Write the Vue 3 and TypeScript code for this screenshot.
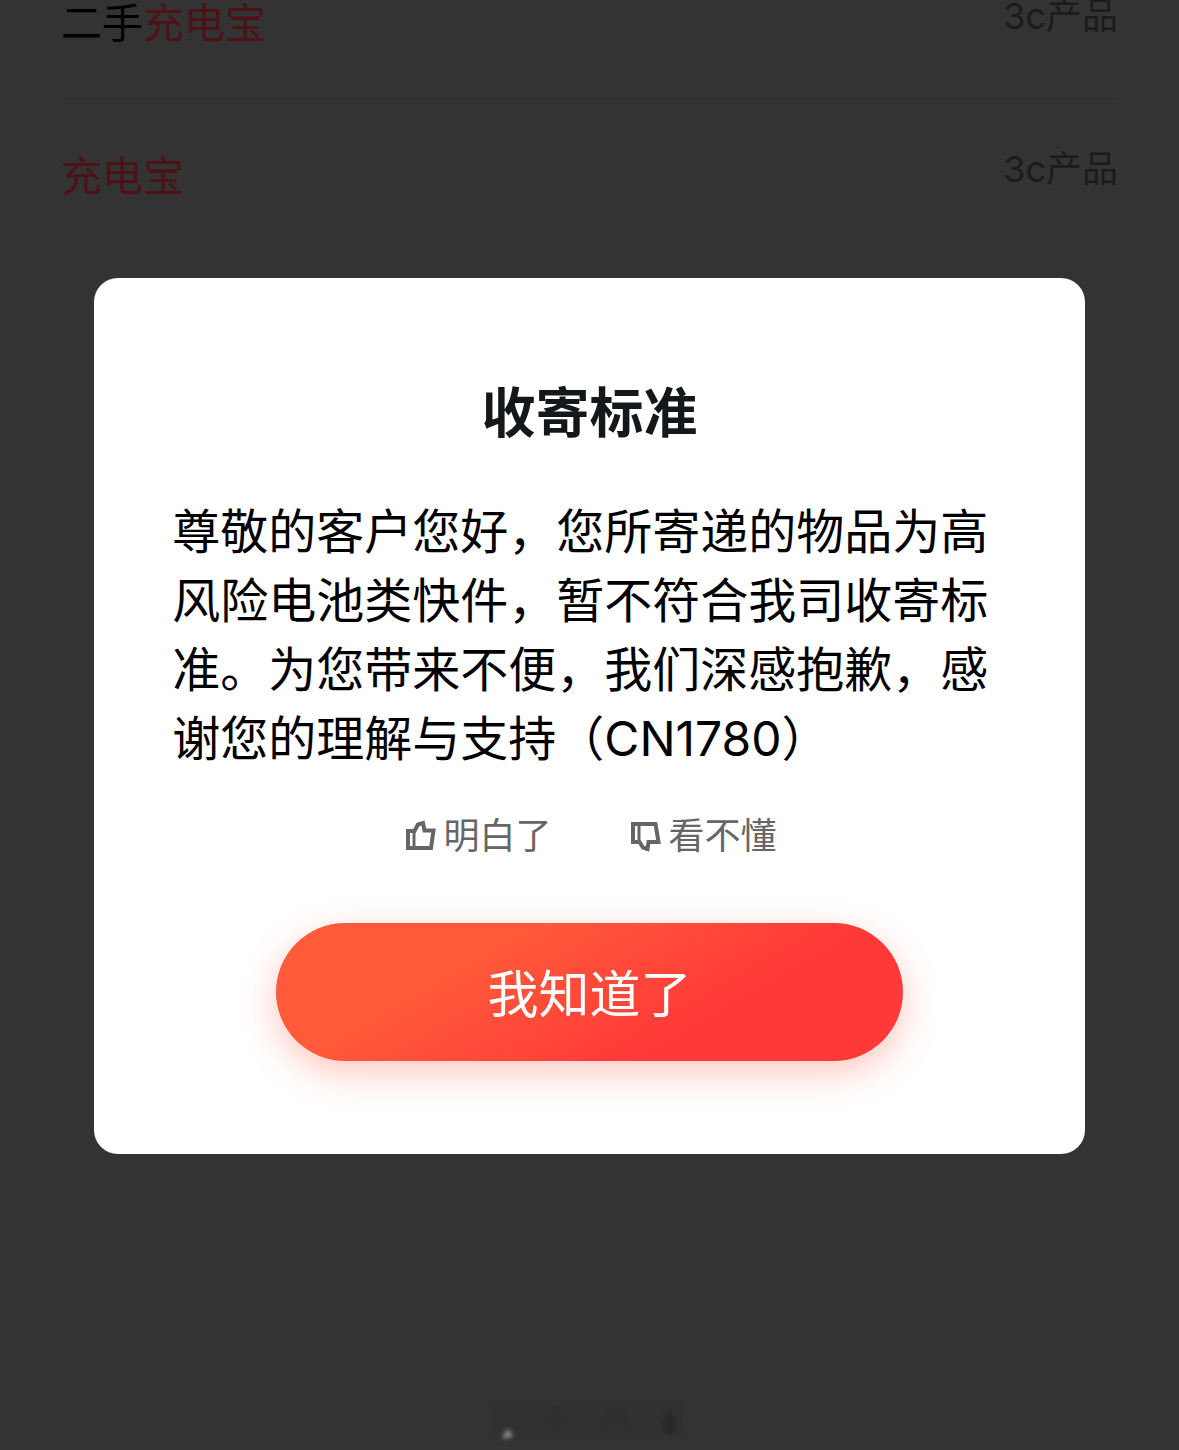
<script setup lang="ts">
import { ref } from 'vue'

interface Segment {
  text: string
  hit: boolean
}

interface Item {
  id: number
  name: Segment[]
  category: string
}

const items: Item[] = [
  {
    id: 1,
    name: [
      { text: '二手', hit: false },
      { text: '充电宝', hit: true },
    ],
    category: '3c产品',
  },
  { id: 2, name: [{ text: '充电宝', hit: true }], category: '3c产品' },
]

const open = ref(true)
const feedback = ref<'clear' | 'unclear' | null>(null)
</script>

<template>
  <div class="page">
    <ul class="results">
      <li v-for="item in items" :key="item.id" class="row">
        <span class="name">
          <span v-for="(part, i) in item.name" :key="i" :class="{ hit: part.hit }">{{ part.text }}</span>
        </span>
        <span class="category">{{ item.category }}</span>
      </li>
    </ul>

    <svg class="smudge" viewBox="0 0 200 40" aria-hidden="true">
      <rect x="4" y="4" width="190" height="32" rx="8" fill="#313131" />
      <ellipse cx="66" cy="14" rx="5" ry="10" fill="#2f2f2f" />
      <ellipse cx="126" cy="18" rx="14" ry="8" fill="#2f2f2f" />
      <ellipse cx="179" cy="24" rx="7" ry="12" fill="#292929" />
      <path d="M12 38L17 29L23 34L20 38Z" fill="#8a8a8a" />
    </svg>

    <div v-if="open" class="overlay">
      <section class="dialog" role="dialog" aria-modal="true" aria-labelledby="dialog-title">
        <h2 id="dialog-title" class="title">收寄标准</h2>
        <p class="message">尊敬的客户您好，您所寄递的物品为高风险电池类快件，暂不符合我司收寄标准。为您带来不便，我们深感抱歉，感谢您的理解与支持（CN1780）</p>
        <div class="feedback">
          <button type="button" class="vote" :aria-pressed="feedback === 'clear'" @click="feedback = 'clear'">
            <svg class="icon" viewBox="0 0 32 32" aria-hidden="true">
              <path d="M3 11H9.5L13 4.5L18 3L19.5 10.5H28.5L26 28H3Z" />
              <path class="cuff" d="M9 11V28" />
            </svg>
            <span>明白了</span>
          </button>
          <button type="button" class="vote" :aria-pressed="feedback === 'unclear'" @click="feedback = 'unclear'">
            <svg class="icon" viewBox="0 0 32 32" aria-hidden="true">
              <path d="M3 4H25.5L28.5 22H18.5L17.5 29L13 27.5L9.5 22H3Z" />
              <path class="cuff" d="M9 4V22" />
            </svg>
            <span>看不懂</span>
          </button>
        </div>
        <button type="button" class="confirm" @click="open = false">我知道了</button>
      </section>
    </div>
  </div>
</template>

<style>
body {
  margin: 0;
  background: #333333;
}
</style>

<style scoped>
.page {
  display: flex;
  flex-direction: column;
  justify-content: space-between;
  align-items: center;
  box-sizing: border-box;
  min-height: 100vh;
  padding-bottom: 10px;
  background: #333333;
  font-family: Inter, "Noto Sans CJK SC", sans-serif;
}

.results {
  align-self: stretch;
  margin: 0;
  padding: 0 61px;
  list-style: none;
}

.row {
  display: flex;
  align-items: flex-start;
  justify-content: space-between;
}

.row + .row {
  margin-top: 52px;
  padding-top: 54px;
  border-top: 1px solid #2f2f2f;
}

.name {
  font-size: 41px;
  line-height: 46px;
  color: #000000;
}

.hit {
  color: #4c1216;
}

.category {
  font-size: 36px;
  line-height: 32px;
  color: #1b1b1b;
}

.smudge {
  width: 200px;
  height: 40px;
  filter: blur(2px);
}

.overlay {
  position: fixed;
  inset: 0;
  display: flex;
  align-items: center;
  justify-content: center;
  padding-bottom: 18px;
}

.dialog {
  display: flex;
  flex-direction: column;
  align-items: center;
  box-sizing: border-box;
  width: 84%;
  padding: 100px 78px 93px;
  border-radius: 24px;
  background: #ffffff;
}

.title {
  margin: 0;
  font-size: 54px;
  line-height: 72px;
  font-weight: 700;
  color: #15181a;
}

.message {
  align-self: stretch;
  margin: 47px 0 39px;
  font-size: 48px;
  line-height: 69px;
  color: #000000;
}

.feedback {
  display: flex;
  gap: 79px;
  padding-left: 3px;
}

.vote {
  display: flex;
  align-items: center;
  gap: 6px;
  padding: 0;
  border: 0;
  background: none;
  font-family: inherit;
  font-size: 36px;
  line-height: 48px;
  color: #666666;
  cursor: pointer;
}

.icon {
  width: 32px;
  height: 32px;
  fill: none;
  stroke: currentColor;
  stroke-width: 4;
}

.cuff {
  stroke-width: 3;
}

.confirm {
  width: 627px;
  max-width: 100%;
  height: 138px;
  margin-top: 63px;
  padding: 6px 0 0;
  border: 0;
  border-radius: 69px;
  background: linear-gradient(150deg, #ff5a3a 30%, #ff3838 70%);
  box-shadow: 0 12px 36px rgba(255, 72, 48, 0.3);
  font-family: inherit;
  font-size: 51px;
  line-height: 72px;
  color: #ffffff;
  cursor: pointer;
}
</style>
